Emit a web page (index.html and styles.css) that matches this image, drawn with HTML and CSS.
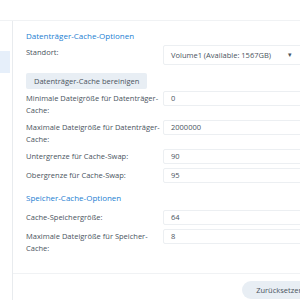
FILE: index.html
```html
<!DOCTYPE html>
<html>
<head>
<meta charset="utf-8">
<link rel="stylesheet" href="styles.css">
</head>
<body>
<div class="header"></div>
<div class="app">
  <div class="sidebar"><div class="nav-active"></div></div>
  <div class="main">
    <div class="content">
      <h2 class="section-title">Datenträger-Cache-Optionen</h2>
      <div class="row row-select">
        <div class="label">Standort:</div>
        <div class="field select"><span>Volume1 (Available: 1567GB)</span><span class="caret">▾</span></div>
      </div>
      <div class="btn-row"><button class="btn">Datenträger-Cache bereinigen</button></div>
      <div class="row">
        <div class="label">Minimale Dateigröße für Datenträger-Cache:</div>
        <div class="field">0</div>
      </div>
      <div class="row">
        <div class="label">Maximale Dateigröße für Datenträger-Cache:</div>
        <div class="field">2000000</div>
      </div>
      <div class="row">
        <div class="label">Untergrenze für Cache-Swap:</div>
        <div class="field">90</div>
      </div>
      <div class="row">
        <div class="label">Obergrenze für Cache-Swap:</div>
        <div class="field">95</div>
      </div>
      <h2 class="section-title second">Speicher-Cache-Optionen</h2>
      <div class="row">
        <div class="label">Cache-Speichergröße:</div>
        <div class="field">64</div>
      </div>
      <div class="row">
        <div class="label">Maximale Dateigröße für Speicher-Cache:</div>
        <div class="field">8</div>
      </div>
    </div>
    <div class="footer"><button class="btn pill">Zurücksetzen</button></div>
  </div>
</div>
</body>
</html>
```
FILE: styles.css
```css
html, body {
  margin: 0;
  padding: 0;
  background: #fff;
  font-family: "Open Sans", "Noto Sans", sans-serif;
  color: #4a545e;
  overflow: hidden;
}
.header {
  height: 20px;
  border-bottom: 1px solid #f0f2f4;
}
.app {
  display: flex;
  height: 279px;
}
.sidebar {
  width: 12px;
  border-right: 1px solid #e8ebee;
  flex: none;
}
.nav-active {
  margin-top: 30px;
  width: 10px;
  height: 22px;
  background: #e6effa;
}
.main {
  flex: 1;
  display: flex;
  flex-direction: column;
  min-width: 0;
}
.content {
  flex: 1;
  padding: 8px 0 0 13px;
}
.section-title {
  margin: 0 0 2px 0;
  font-size: 8px;
  font-weight: normal;
  color: #2480d2;
  line-height: 14px;
}
.section-title.second {
  margin-top: 8px;
  margin-bottom: 5px;
}
.row {
  display: flex;
  align-items: flex-start;
  margin-bottom: 4px;
}
.row-select {
  margin-bottom: 2px;
}
.label {
  width: 137px;
  flex: none;
  font-size: 7.5px;
  line-height: 12px;
  padding-top: 1px;
}
.field {
  flex: 1;
  box-sizing: border-box;
  height: 15px;
  border: 1px solid #eceff2;
  border-radius: 2px;
  font-size: 7.5px;
  line-height: 13px;
  padding: 0 7px;
  margin-right: -10px;
  color: #4a545e;
  display: flex;
  justify-content: space-between;
}
.select {
  height: 20px;
  line-height: 18px;
}
.caret {
  font-size: 7px;
  margin-right: 10px;
}
.btn-row {
  margin: 0 0 2px 0;
}
.btn {
  font-family: inherit;
  font-size: 7.5px;
  color: #4a545e;
  background: #e8eef4;
  border: none;
  border-radius: 2px;
  height: 16px;
  padding: 0 8px;
  margin: 0;
}
.footer {
  height: 26px;
  border-top: 1px solid #f0f2f4;
  display: flex;
  justify-content: flex-end;
  align-items: flex-end;
}
.pill {
  border-radius: 9px;
  height: 18px;
  padding: 0 14px;
  margin-right: -17px;
  margin-bottom: 1px;
}
```
